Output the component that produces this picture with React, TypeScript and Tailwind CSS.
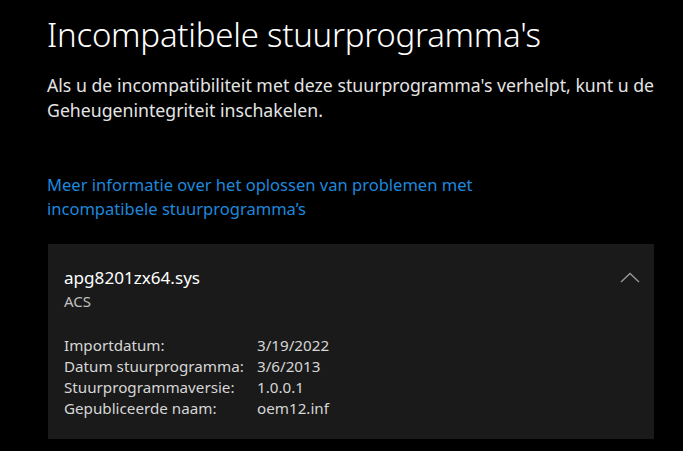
import React from "react";

const rows: [string, string][] = [
  ["Importdatum:", "3/19/2022"],
  ["Datum stuurprogramma:", "3/6/2013"],
  ["Stuurprogrammaversie:", "1.0.0.1"],
  ["Gepubliceerde naam:", "oem12.inf"],
];

export default function App() {
  return (
    <div
      className="w-[683px] h-[451px] bg-black overflow-hidden text-white"
      style={{ fontFamily: '"Noto Sans", "Open Sans", sans-serif' }}
    >
      <div className="pl-[47px] pr-[20px] pt-[13px]">
        <h1 className="text-[33px] leading-[44px] font-light tracking-[-0.25px]">
          Incompatibele stuurprogramma's
        </h1>
        <p className="mt-[16px] w-[620px] text-[17.7px] leading-[25px] text-[#e4e4e4]">
          Als u de incompatibiliteit met deze stuurprogramma's verhelpt, kunt u de Geheugenintegriteit inschakelen.
        </p>
        <a className="block mt-[50px] w-[440px] text-[16.55px] leading-[24px] text-[#1e88dc]">
          Meer informatie over het oplossen van problemen met incompatibele stuurprogramma’s
        </a>
        <div className="mt-[23px] ml-[1px] w-[606px] h-[195px] bg-[#1a1a1a] pl-[16px] pr-[14px] pt-[22px]">
          <div className="flex justify-between">
            <div>
              <div className="text-[17.1px] leading-[24px] text-white">apg8201zx64.sys</div>
              <div className="text-[15px] leading-[22px] text-[#c0c0c0]">ACS</div>
            </div>
            <svg width="20" height="12" viewBox="0 0 20 12" className="mt-[6px]">
              <path d="M1 10 L10 1.5 L19 10" fill="none" stroke="#9a9a9a" strokeWidth="1.3" />
            </svg>
          </div>
          <div className="mt-[23px] grid grid-cols-[193px_1fr] text-[15.2px] leading-[21px] text-[#d6d6d6]">
            {rows.map(([k, v]) => (
              <React.Fragment key={k}>
                <div>{k}</div>
                <div>{v}</div>
              </React.Fragment>
            ))}
          </div>
        </div>
      </div>
    </div>
  );
}
